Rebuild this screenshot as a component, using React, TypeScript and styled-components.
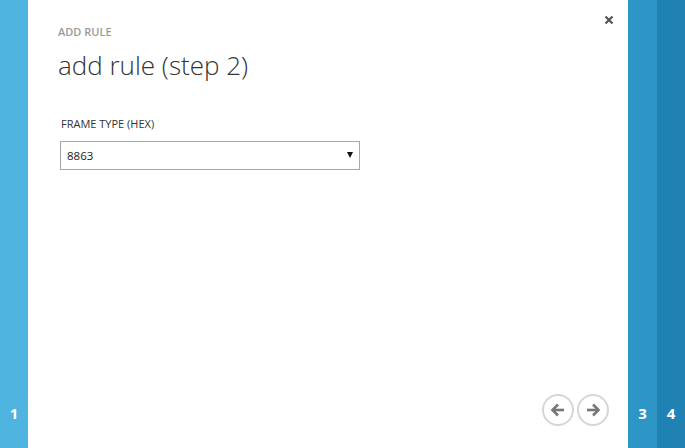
import React from "react";
import styled, { createGlobalStyle } from "styled-components";

const Global = createGlobalStyle`
  html, body { margin: 0; padding: 0; background: #fff; }
  body { font-family: "Open Sans", "Liberation Sans", sans-serif; }
`;

const Page = styled.div`
  display: flex;
  width: 685px;
  height: 448px;
  overflow: hidden;
`;

const Strip = styled.div<{ $bg: string; $w: number }>`
  width: ${(p) => p.$w}px;
  flex: none;
  background: ${(p) => p.$bg};
  display: flex;
  flex-direction: column;
  justify-content: flex-end;
  align-items: center;
  padding-bottom: 26px;
  box-sizing: border-box;
`;

const StepNum = styled.span`
  color: #fff;
  font-family: "Open Sans", "Liberation Sans", sans-serif;
  font-weight: 700;
  font-size: 15px;
  line-height: 18px;
`;

const Panel = styled.div`
  position: relative;
  flex: 1;
  background: #fff;
  display: flex;
  flex-direction: column;
  padding: 25px 0 0 30px;
  box-sizing: border-box;
`;

const Close = styled.button`
  position: absolute;
  top: 13px;
  right: 12px;
  width: 14px;
  height: 14px;
  border: 0;
  padding: 0;
  background: transparent;
  display: flex;
  align-items: center;
  justify-content: center;
`;

const Kicker = styled.div`
  font-family: "Open Sans", "Liberation Sans", sans-serif;
  font-size: 11px;
  font-weight: 600;
  color: #9a9a9a;
  line-height: 14px;
`;

const Title = styled.h1`
  margin: 10px 0 0 0;
  font-family: "Open Sans", "Liberation Sans", sans-serif;
  font-weight: 300;
  font-size: 26px;
  line-height: 32px;
  color: #333;
`;

const Field = styled.div`
  margin: 36px 0 0 2px;
  display: flex;
  flex-direction: column;
  width: 300px;
`;

const Label = styled.label`
  font-family: "Open Sans", "Liberation Sans", sans-serif;
  font-size: 11px;
  color: #333;
  line-height: 14px;
  margin-left: 1px;
`;

const SelectBox = styled.div`
  margin-top: 10px;
  height: 29px;
  box-sizing: border-box;
  border: 1px solid #a8a8a8;
  display: flex;
  align-items: center;
  justify-content: space-between;
  padding: 0 6px 0 6px;
  font-family: "Open Sans", "Liberation Sans", sans-serif;
  font-size: 11.5px;
  color: #222;
`;

const Arrow = styled.span`
  width: 0;
  height: 0;
  border-left: 3.5px solid transparent;
  border-right: 3.5px solid transparent;
  border-top: 6px solid #111;
  margin-top: -2px;
`;

const Footer = styled.div`
  margin-top: auto;
  display: flex;
  justify-content: flex-end;
  gap: 3px;
  padding: 0 19px 22px 0;
`;

const NavBtn = styled.button`
  width: 32px;
  height: 32px;
  border-radius: 50%;
  border: 2px solid #d6d6d6;
  background: #fff;
  padding: 0;
  box-sizing: border-box;
  display: flex;
  align-items: center;
  justify-content: center;
`;

const ArrowIcon = ({ dir }: { dir: "left" | "right" }) => (
  <svg width="16" height="14" viewBox="0 0 16 14">
    <g
      transform={dir === "left" ? "" : "translate(16,0) scale(-1,1)"}
      fill="none"
      stroke="#777"
      strokeWidth="2.6"
      strokeLinecap="butt"
      strokeLinejoin="miter"
    >
      <path d="M2.5 7 H14" />
      <path d="M8 1.5 L2.5 7 L8 12.5" />
    </g>
  </svg>
);

export default function App() {
  return (
    <>
      <Global />
      <Page>
        <Strip $bg="#4fb4e0" $w={28}>
          <StepNum>1</StepNum>
        </Strip>
        <Panel>
          <Close aria-label="close">
            <svg width="10" height="10" viewBox="0 0 10 10">
              <path d="M1.5 1.5 L8.5 8.5 M8.5 1.5 L1.5 8.5" stroke="#555" strokeWidth="2.2" />
            </svg>
          </Close>
          <Kicker>ADD RULE</Kicker>
          <Title>add rule (step 2)</Title>
          <Field>
            <Label>FRAME TYPE (HEX)</Label>
            <SelectBox>
              <span>8863</span>
              <Arrow />
            </SelectBox>
          </Field>
          <Footer>
            <NavBtn aria-label="back">
              <ArrowIcon dir="left" />
            </NavBtn>
            <NavBtn aria-label="next">
              <ArrowIcon dir="right" />
            </NavBtn>
          </Footer>
        </Panel>
        <Strip $bg="#2e96c6" $w={29}>
          <StepNum>3</StepNum>
        </Strip>
        <Strip $bg="#1f82b2" $w={28}>
          <StepNum>4</StepNum>
        </Strip>
      </Page>
    </>
  );
}
